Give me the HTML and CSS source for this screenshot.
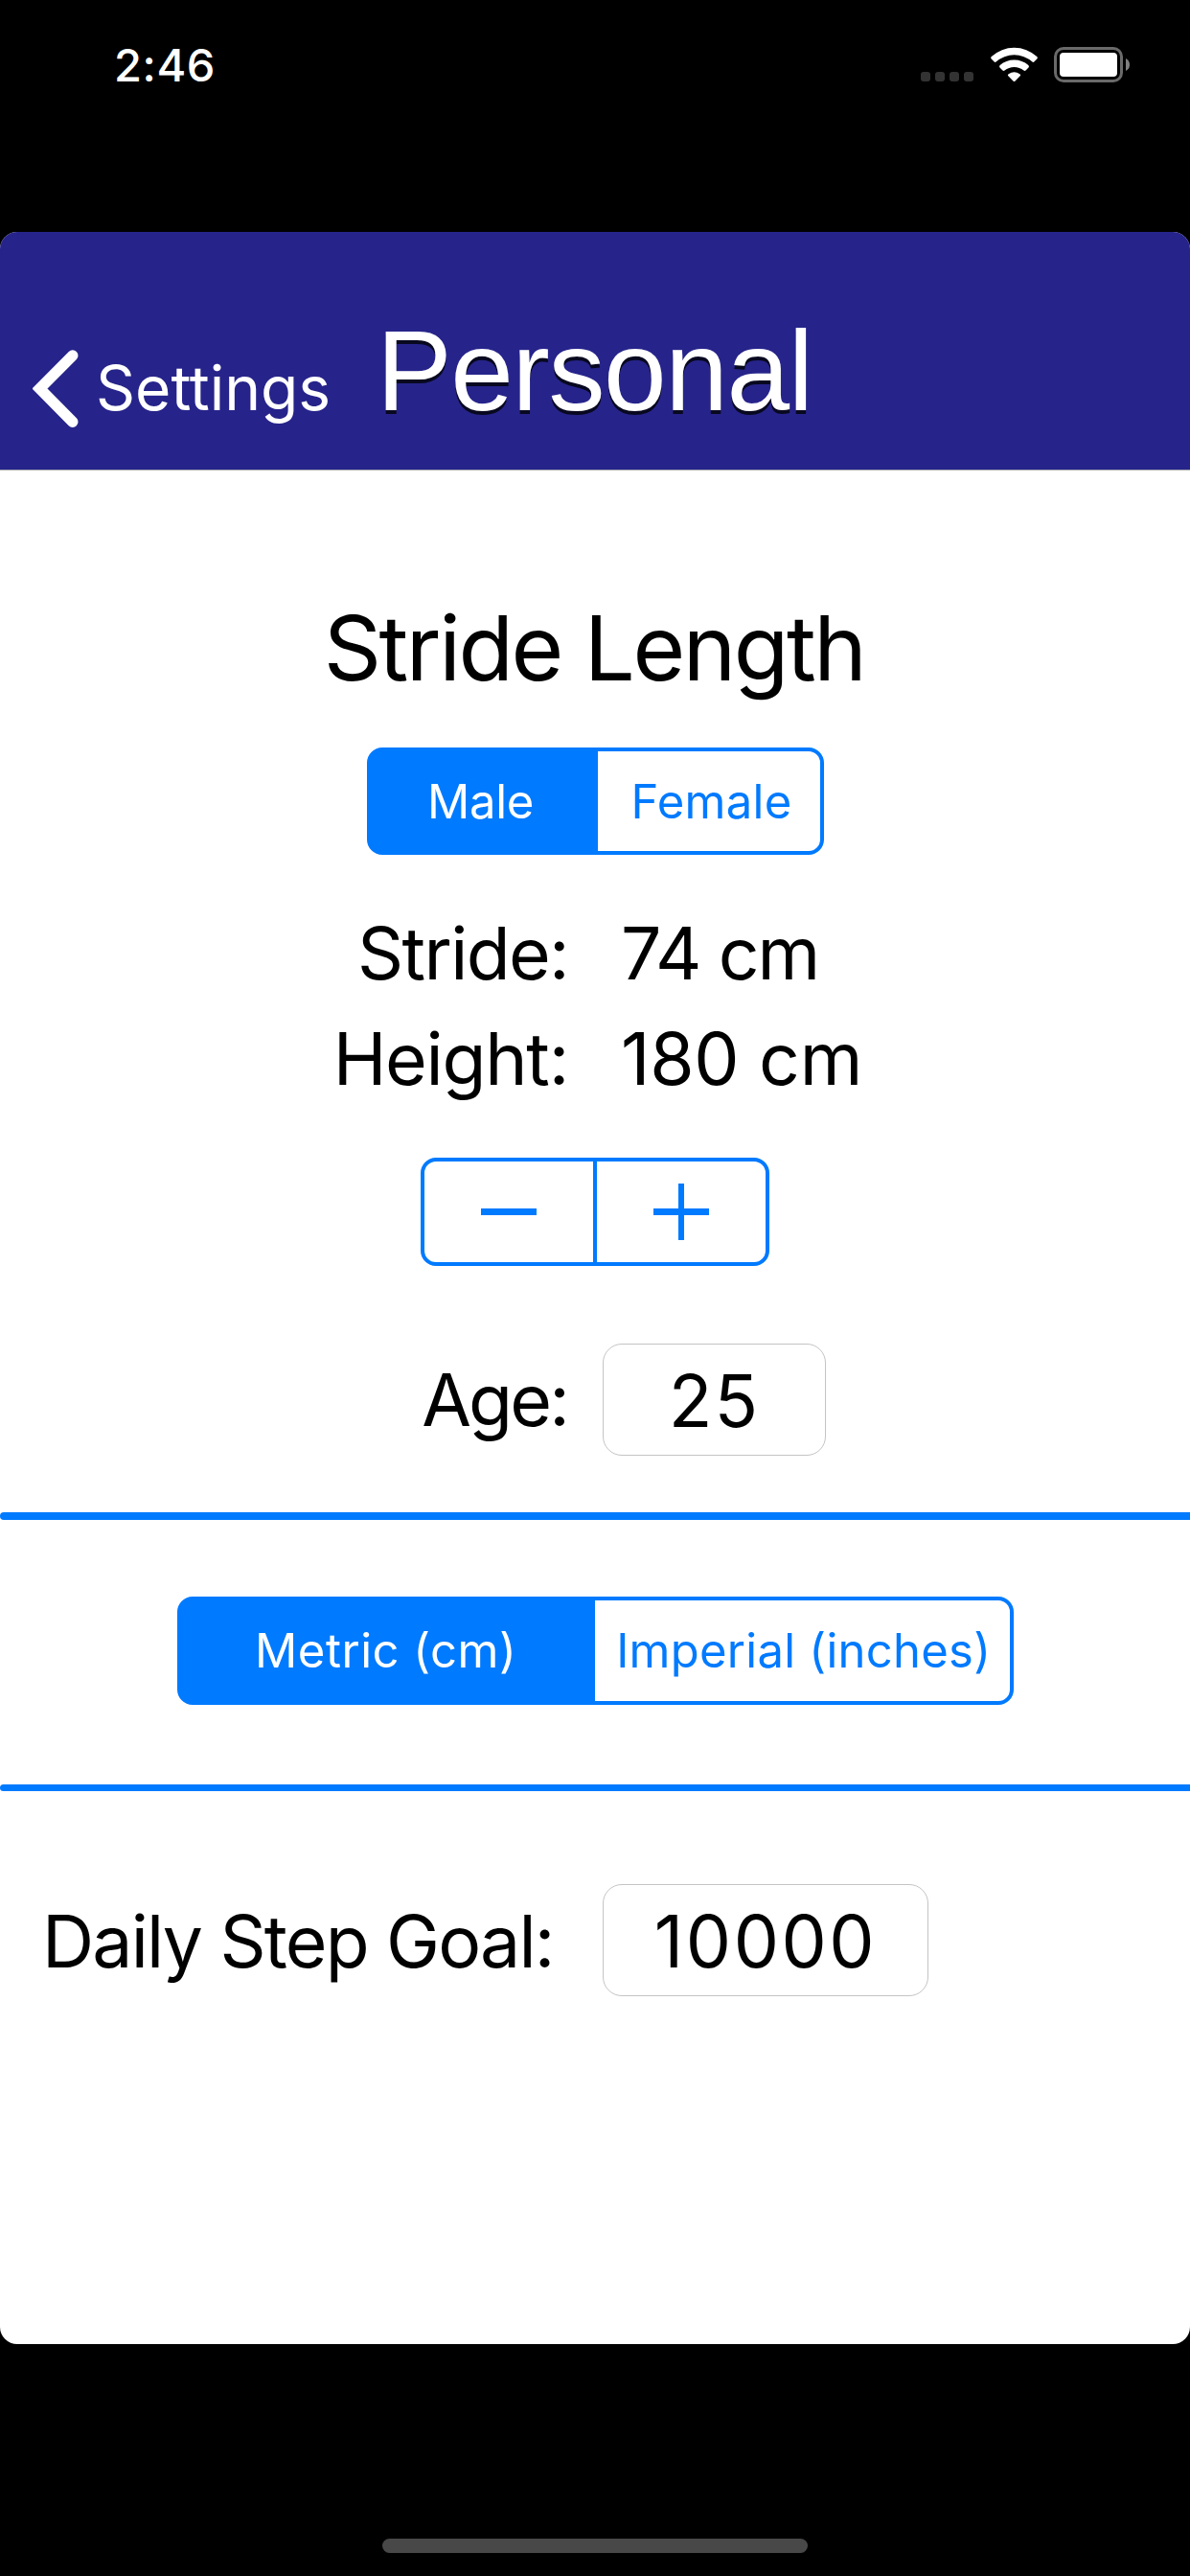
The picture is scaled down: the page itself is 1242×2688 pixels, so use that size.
FILE: index.html
```html
<!DOCTYPE html>
<html lang="en">
<head>
<meta charset="utf-8">
<title>Personal</title>
<link rel="stylesheet" href="styles.css">
</head>
<body>
<div class="status-bar">
  <span class="time">2:46</span>
  <div class="status-icons">
    <div class="signal"><i></i><i></i><i></i><i></i></div>
    <svg class="wifi" width="51" height="38" viewBox="0 0 51 38" fill="#fff">
      <path d="M1.7 12.5Q0.5 11.3 1.8 10.1A35 35 0 0 1 49.200 10.100Q50.500 11.300 49.300 12.500L46.300 15.500Q45.400 16.300 44.400 15.500A28.500 28.500 0 0 0 6.600 15.500Q5.600 16.300 4.700 15.500Z"/>
      <path d="M10.500 21.400Q9.400 20.200 10.700 19.100A22.500 22.500 0 0 1 40.300 19.100Q41.600 20.200 40.500 21.400L37.500 24.400Q36.600 25.300 35.500 24.500A16 16 0 0 0 15.500 24.500Q14.400 25.300 13.500 24.400Z"/>
      <path d="M19.300 30.300Q18.200 29.100 19.600 28.200A10.500 10.500 0 0 1 31.400 28.200Q32.800 29.100 31.700 30.300L26.300 35.700Q25.500 36.400 24.700 35.700Z"/>
    </svg>
    <svg class="battery" width="80" height="38" viewBox="0 0 80 38">
      <rect x="1.500" y="1.500" width="69" height="34" rx="8.500" fill="none" stroke="#6a6a6a" stroke-width="3"/>
      <rect x="6" y="6" width="60" height="25" rx="4" fill="#fff"/>
      <path d="M75 12Q79 14 79 18.500T75 25Z" fill="#808080"/>
    </svg>
  </div>
</div>

<main class="app">
  <header class="nav">
    <svg class="chevron" width="50" height="82" viewBox="0 0 50 82">
      <path d="M41.800 7 7.500 41.500 41.800 76.200" fill="none" stroke="#fff" stroke-width="11.400" stroke-linecap="round"/>
    </svg>
    <div class="nav-text">
      <span class="back">Settings</span>
      <h1 class="title">Personal</h1>
    </div>
  </header>

  <h2 class="heading">Stride Length</h2>

  <div class="segmented gender">
    <span class="segment male">Male</span>
    <span class="segment female">Female</span>
  </div>

  <div class="stats">
    <span class="label stride">Stride:</span><span class="stride-value">74 cm</span>
    <span class="label height">Height:</span><span class="height-value">180 cm</span>
  </div>

  <div class="stepper">
    <span class="step"><svg width="58" height="60" viewBox="0 0 58 60"><path d="M0 26h58v7H0z"/></svg></span>
    <span class="step"><svg width="58" height="60" viewBox="0 0 58 60"><path d="M0 26h58v7H0zM26 0h6v59H26z"/></svg></span>
  </div>

  <div class="row age-row">
    <span class="label age">Age:</span>
    <span class="field age-field">25</span>
  </div>

  <div class="rule rule-top"></div>

  <div class="segmented units">
    <span class="segment metric">Metric (cm)</span>
    <span class="segment imperial">Imperial (inches)</span>
  </div>

  <div class="rule rule-bottom"></div>

  <div class="row goal-row">
    <span class="goal">Daily Step Goal:</span>
    <span class="field goal-field">10000</span>
  </div>
</main>

<div class="home-bar"></div>
</body>
</html>
```
FILE: styles.css
```css
* { box-sizing: border-box; }

body {
  margin: 0;
  width: 1242px;
  height: 2688px;
  background: #000;
  color: #000;
  font-family: Inter, "Liberation Sans", sans-serif;
  font-size: 75px;
  display: flex;
  flex-direction: column;
  overflow: hidden;
}

svg { display: block; }

/* Status bar */
.status-bar {
  height: 242px;
  flex: none;
  display: flex;
  justify-content: space-between;
  align-items: flex-start;
  padding: 38px 63px 0 119px;
}
.time {
  color: #fff;
  font-size: 47px;
  font-weight: 500;
  line-height: 60px;
  letter-spacing: 0.6px;
}
.status-icons {
  display: flex;
  padding-top: 11px;
}
.signal {
  display: flex;
  gap: 5px;
  margin: 26px 17px 0 0;
}
.signal i {
  width: 10px;
  height: 10px;
  border-radius: 3px;
  background: #333;
}
.battery { margin-left: 16px; margin-right: -1px; }

/* App card */
.app {
  height: 2204px;
  flex: none;
  display: flex;
  flex-direction: column;
  align-items: center;
  background: #fff;
  border-radius: 18px;
  overflow: hidden;
}
.nav {
  width: 100%;
  height: 249px;
  flex: none;
  display: flex;
  align-items: flex-end;
  gap: 16px;
  padding: 0 34px 44px;
  background: #26248a;
  border-bottom: 1px solid #b2b2b2;
  color: #fff;
}
.nav-text {
  display: flex;
  align-items: baseline;
  gap: 48px;
}
.back {
  font-size: 64px;
  line-height: 64px;
}
.title {
  margin: 0;
  font-family: "Liberation Sans", Arial, sans-serif;
  font-size: 118px;
  font-weight: 400;
  line-height: 117px;
  letter-spacing: -1.4px;
  text-shadow: 0 4px 0 #080820;
}

.heading {
  margin: 135px 0 54px;
  padding-right: 2px;
  font-size: 94px;
  font-weight: 400;
  line-height: 100px;
  letter-spacing: -2.500px;
}

/* Segmented controls */
.segmented {
  display: grid;
  grid-template-columns: 1fr 1fr;
  border: 4px solid #007aff;
  border-radius: 16px;
  background: linear-gradient(90deg, #007aff 50%, #fff 50%) border-box;
  color: #007aff;
  font-size: 49px;
}
.segment {
  display: flex;
  align-items: center;
  justify-content: center;
  white-space: nowrap;
}
.male, .metric { color: #fff; }
.gender {
  width: 477px;
  height: 112px;
  margin-left: 1px;
  grid-template-columns: 237px 1fr;
  background: linear-gradient(90deg, #007aff 241px, #fff 241px) border-box;
}
.male { letter-spacing: -0.35px; padding-right: 8px; }
.female { letter-spacing: 0.27px; padding-left: 5px; }
.units {
  width: 873px;
  height: 113px;
  margin: 80px 0 83px;
}
.metric { letter-spacing: 0.5px; padding-right: 4px; }
.imperial { letter-spacing: 0.25px; padding-left: 3px; }

/* Values */
.label { text-align: right; }
.stats {
  align-self: stretch;
  display: grid;
  grid-template-columns: 593px 1fr;
  column-gap: 55px;
  margin: 48px 0;
  line-height: 110px;
}
.stride { letter-spacing: -1.65px; }
.height { letter-spacing: -1.25px; }
.stride-value { letter-spacing: -2px; }
.height-value { letter-spacing: -0.3px; }

/* Stepper */
.stepper {
  width: 364px;
  height: 113px;
  display: grid;
  grid-template-columns: 176px 1fr;
  border: 4px solid #007aff;
  border-radius: 16px;
  fill: #007aff;
}
.step {
  display: flex;
  align-items: center;
  justify-content: center;
}
.step + .step { border-left: 4px solid #007aff; }

/* Input rows */
.row {
  align-self: stretch;
  display: grid;
  height: 117px;
  line-height: 117px;
}
.field {
  height: 117px;
  border: 1px solid #c4c4c4;
  border-radius: 20px;
  text-align: center;
  line-height: 117px;
}
.age-row {
  grid-template-columns: 592px 233px;
  column-gap: 37px;
  margin: 81px 0 59px;
}
.age { letter-spacing: -2.8px; }
.age-field { letter-spacing: 2px; }
.goal-row {
  grid-template-columns: 549px 340px;
  column-gap: 36px;
  padding-left: 44px;
  margin-top: 97px;
}
.goal {
  letter-spacing: -1.8px;
  padding-top: 1px;
  white-space: nowrap;
}
.goal-field { letter-spacing: 2.5px; }

.rule {
  align-self: stretch;
  flex: none;
  background: #007aff;
  border-radius: 4px 0 0 4px;
}
.rule-top { height: 8px; }
.rule-bottom { height: 7px; }

/* Home indicator */
.home-bar {
  width: 444px;
  height: 15px;
  margin: 203px auto 0;
  border-radius: 8px;
  background: #484848;
}
```
